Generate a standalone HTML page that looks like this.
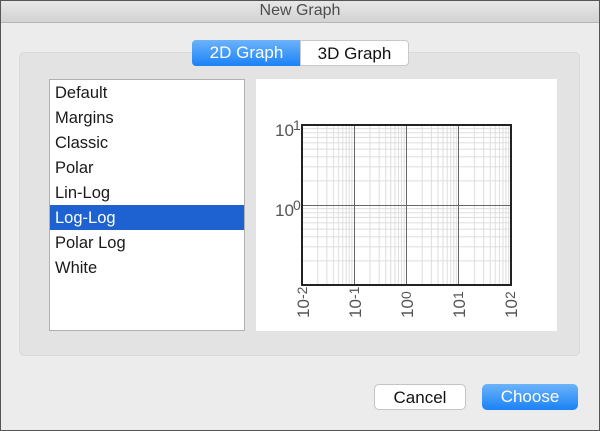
<!DOCTYPE html>
<html><head><style>
*{margin:0;padding:0;box-sizing:border-box}
body{width:600px;height:431px;background:#ececec;font-family:"Liberation Sans",sans-serif;position:relative;overflow:hidden}
.frame{position:absolute;left:0;top:0;width:600px;height:431px;border:1px solid #555;pointer-events:none}
.title{position:absolute;left:0;top:0;width:600px;height:23px;background:linear-gradient(#e8e8e8,#d3d3d3);border-bottom:1px solid #b5b5b5;text-align:center;font-size:16px;line-height:22px;color:#4d4d4d}
.group{position:absolute;left:19px;top:52px;width:561px;height:304px;background:#e3e3e3;border:1px solid #dadada;border-radius:5px}
.tab{position:absolute;top:40px;height:26px;font-size:17px;line-height:25px;text-align:center;border-radius:4px}
.t1{left:192px;width:109px;background:linear-gradient(#6cb3fa,#1a82f6);color:#fff;border-radius:4px 0 0 4px}
.t2{left:300px;width:109px;background:#fff;color:#111;border:1px solid #c8c8c8;border-radius:0 4px 4px 0}
.list{position:absolute;left:49px;top:79px;width:196px;height:252px;background:#fff;border:1px solid #b0b0b0}
.row{height:25px;font-size:16.5px;line-height:27px;padding-left:5px;color:#1a1a1a}
.sel{background:#1d62d0;color:#fff}
.graph{position:absolute;left:256px;top:79px;width:301px;height:252px;background:#fff}
.btn{position:absolute;top:384px;height:26px;font-size:17px;line-height:25px;text-align:center;border-radius:5px}
.cancel{left:374px;width:92px;background:#fff;border:1px solid #c4c4c4;color:#111}
.choose{left:482px;width:96px;background:linear-gradient(#6cb3fa,#1a82f6);color:#fff}
</style></head><body>
<div class="title">New Graph</div>
<div class="group"></div>
<div class="tab t1">2D Graph</div>
<div class="tab t2">3D Graph</div>
<div class="list">
<div class="row">Default</div><div class="row">Margins</div><div class="row">Classic</div><div class="row">Polar</div><div class="row">Lin-Log</div><div class="row sel">Log-Log</div><div class="row">Polar Log</div><div class="row">White</div>
</div>
<div class="graph">
<svg width="301" height="252" viewBox="256 79 301 252" style="position:absolute;left:0;top:0">
<defs>
<pattern id="px" patternUnits="userSpaceOnUse" x="302" y="0" width="52.25" height="10">
<g stroke="#ddd" stroke-width="1">
<line x1="15.7" y1="0" x2="15.7" y2="10"/><line x1="24.9" y1="0" x2="24.9" y2="10"/><line x1="31.5" y1="0" x2="31.5" y2="10"/><line x1="36.5" y1="0" x2="36.5" y2="10"/><line x1="40.7" y1="0" x2="40.7" y2="10"/><line x1="44.2" y1="0" x2="44.2" y2="10"/><line x1="47.2" y1="0" x2="47.2" y2="10"/><line x1="49.9" y1="0" x2="49.9" y2="10"/></g>
</pattern>
<pattern id="py" patternUnits="userSpaceOnUse" x="0" y="125" width="10" height="80">
<g stroke="#ddd" stroke-width="1">
<line y1="55.9" x1="0" y2="55.9" x2="10"/><line y1="41.8" x1="0" y2="41.8" x2="10"/><line y1="31.8" x1="0" y2="31.8" x2="10"/><line y1="24.1" x1="0" y2="24.1" x2="10"/><line y1="17.8" x1="0" y2="17.8" x2="10"/><line y1="12.4" x1="0" y2="12.4" x2="10"/><line y1="7.8" x1="0" y2="7.8" x2="10"/><line y1="3.7" x1="0" y2="3.7" x2="10"/></g>
</pattern>
</defs>
<rect x="302" y="125" width="209" height="160" fill="url(#px)"/>
<rect x="302" y="125" width="209" height="160" fill="url(#py)"/>
<g stroke="#666" stroke-width="1">
<line x1="354.5" y1="125" x2="354.5" y2="285"/><line x1="406.5" y1="125" x2="406.5" y2="285"/><line x1="458.5" y1="125" x2="458.5" y2="285"/>
<line x1="302" y1="205.5" x2="511" y2="205.5"/>
</g>
<rect x="302" y="125" width="209" height="160" fill="none" stroke="#222" stroke-width="2"/>
<g font-family="Liberation Sans" font-size="17" fill="#555">
<text x="275" y="136">10</text><text x="293" y="130" font-size="14">1</text>
<text x="275" y="216">10</text><text x="293" y="210" font-size="14">0</text>
<g transform="rotate(-90)">
<text x="-318" y="309">10</text><text x="-299" y="307" font-size="14">-2</text>
<text x="-318" y="361">10</text><text x="-299" y="359" font-size="14">-1</text>
<text x="-318" y="413">10</text><text x="-299" y="411" font-size="14">0</text>
<text x="-318" y="465">10</text><text x="-299" y="463" font-size="14">1</text>
<text x="-318" y="517">10</text><text x="-299" y="515" font-size="14">2</text>
</g></g>
</svg>
</div>
<div class="btn cancel">Cancel</div>
<div class="btn choose">Choose</div>
<div class="frame"></div>
</body></html>
